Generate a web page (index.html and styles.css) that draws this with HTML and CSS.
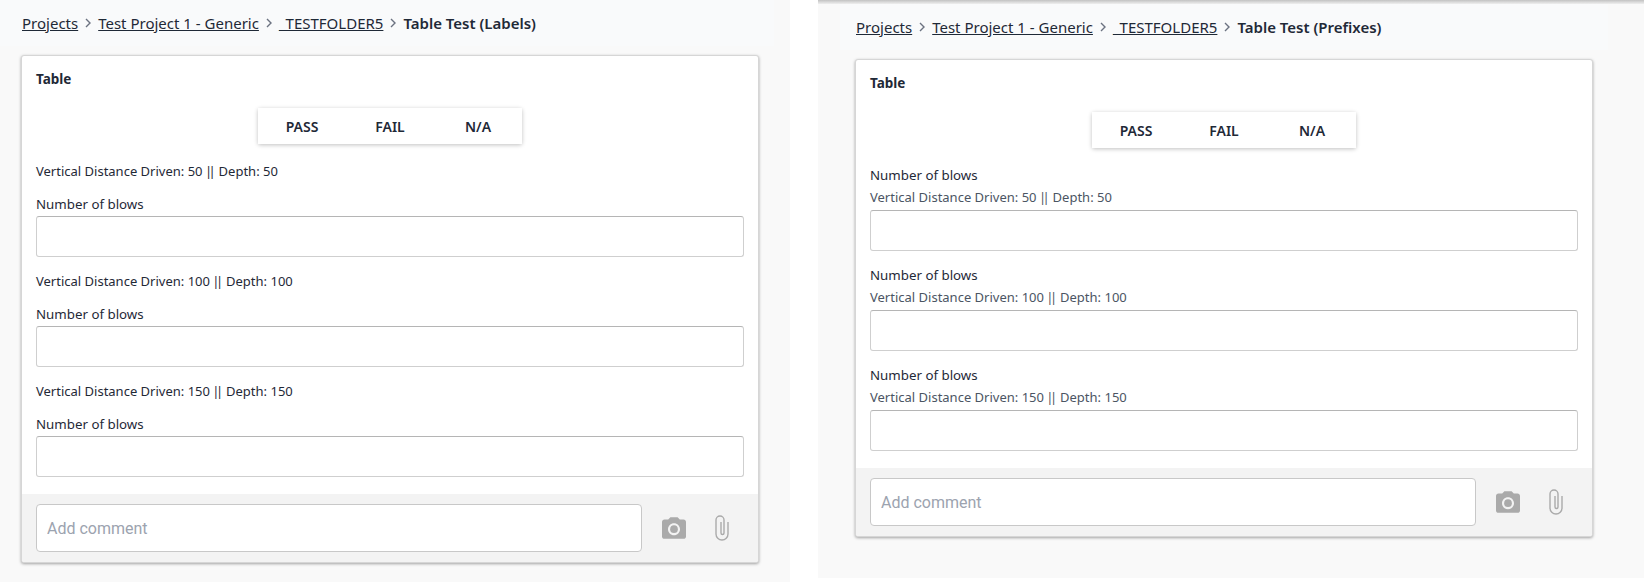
FILE: index.html
```html
<!DOCTYPE html>
<html>
<head>
  <title>Table Test</title>
  <link rel="stylesheet" href="styles.css">
</head>
<body>
  <div class="page">
    <div class="pane pane-left">
      <div class="view">
        <nav class="crumbs">
          <a href="#">Projects</a>
          <svg class="chev" viewBox="0 0 8 12"><path d="M2 2l4 4-4 4"/></svg>
          <a href="#">Test Project 1 - Generic</a>
          <svg class="chev" viewBox="0 0 8 12"><path d="M2 2l4 4-4 4"/></svg>
          <a href="#">_TESTFOLDER5</a>
          <svg class="chev" viewBox="0 0 8 12"><path d="M2 2l4 4-4 4"/></svg>
          <b>Table Test (Labels)</b>
        </nav>
        <div class="card">
          <div class="card-body">
            <h4>Table</h4>
            <div class="choices">
              <button>PASS</button><button>FAIL</button><button>N/A</button>
            </div>
            <div class="row">
              <p class="row-text">Vertical Distance Driven: 50 <span class="bars">||</span> Depth: 50</p>
              <label class="row-label">Number of blows</label>
              <input type="text" class="field">
            </div>
            <div class="row">
              <p class="row-text">Vertical Distance Driven: 100 <span class="bars">||</span> Depth: 100</p>
              <label class="row-label">Number of blows</label>
              <input type="text" class="field">
            </div>
            <div class="row">
              <p class="row-text">Vertical Distance Driven: 150 <span class="bars">||</span> Depth: 150</p>
              <label class="row-label">Number of blows</label>
              <input type="text" class="field">
            </div>
          </div>
          <div class="card-foot">
            <input type="text" class="comment" placeholder="Add comment">
            <div class="tools">
              <svg class="cam" viewBox="2 2 20 18"><path fill-rule="evenodd" d="M9 2L7.17 4H4c-1.1 0-2 .9-2 2v12c0 1.1.9 2 2 2h16c1.1 0 2-.9 2-2V6c0-1.1-.9-2-2-2h-3.17L15 2H9zm3 15c-2.76 0-5-2.24-5-5s2.24-5 5-5 5 2.24 5 5-2.24 5-5 5z"/><circle cx="12" cy="12" r="3.2"/></svg>
              <svg class="clip" viewBox="0 0 14 26"><path d="M13 7v12a6 6 0 0 1-12 0V5a4 4 0 0 1 8 0v13a1.5 1.5 0 0 1-3 0V7"/></svg>
            </div>
          </div>
        </div>
      </div>
    </div>

    <div class="pane pane-right">
      <div class="view">
        <nav class="crumbs">
          <a href="#">Projects</a>
          <svg class="chev" viewBox="0 0 8 12"><path d="M2 2l4 4-4 4"/></svg>
          <a href="#">Test Project 1 - Generic</a>
          <svg class="chev" viewBox="0 0 8 12"><path d="M2 2l4 4-4 4"/></svg>
          <a href="#">_TESTFOLDER5</a>
          <svg class="chev" viewBox="0 0 8 12"><path d="M2 2l4 4-4 4"/></svg>
          <b>Table Test (Prefixes)</b>
        </nav>
        <div class="card">
          <div class="card-body">
            <h4>Table</h4>
            <div class="choices">
              <button>PASS</button><button>FAIL</button><button>N/A</button>
            </div>
            <div class="row">
              <label class="row-label">Number of blows</label>
              <p class="row-help">Vertical Distance Driven: 50 <span class="bars">||</span> Depth: 50</p>
              <input type="text" class="field">
            </div>
            <div class="row">
              <label class="row-label">Number of blows</label>
              <p class="row-help">Vertical Distance Driven: 100 <span class="bars">||</span> Depth: 100</p>
              <input type="text" class="field">
            </div>
            <div class="row">
              <label class="row-label">Number of blows</label>
              <p class="row-help">Vertical Distance Driven: 150 <span class="bars">||</span> Depth: 150</p>
              <input type="text" class="field">
            </div>
          </div>
          <div class="card-foot">
            <input type="text" class="comment" placeholder="Add comment">
            <div class="tools">
              <svg class="cam" viewBox="2 2 20 18"><path fill-rule="evenodd" d="M9 2L7.17 4H4c-1.1 0-2 .9-2 2v12c0 1.1.9 2 2 2h16c1.1 0 2-.9 2-2V6c0-1.1-.9-2-2-2h-3.17L15 2H9zm3 15c-2.76 0-5-2.24-5-5s2.24-5 5-5 5 2.24 5 5-2.24 5-5 5z"/><circle cx="12" cy="12" r="3.2"/></svg>
              <svg class="clip" viewBox="0 0 14 26"><path d="M13 7v12a6 6 0 0 1-12 0V5a4 4 0 0 1 8 0v13a1.5 1.5 0 0 1-3 0V7"/></svg>
            </div>
          </div>
        </div>
      </div>
    </div>
  </div>
</body>
</html>
```

FILE: styles.css
```css
html, body {
  margin: 0;
  height: 100%;
  overflow: hidden;
  background: #fff;
}

body {
  font-family: "Noto Sans", Arial, sans-serif;
  color: #1f2937;
}

.page {
  display: flex;
  height: 582px;
}

.pane {
  background: #f9f9f9;
}

.pane-left {
  width: 790px;
}

.pane-right {
  flex: 1;
  height: 578px;
  margin-left: 28px;
  padding: 4px 0 0 22px;
  background: linear-gradient(#c2c2c2, #efefef 4px, #f9f9f9 4px);
  box-sizing: border-box;
}

.pane-left .view {
  width: 774px;
  padding: 0 15px 0 21px;
  box-sizing: border-box;
}

.pane-right .view {
  width: 768px;
  padding: 0 15px;
  box-sizing: border-box;
}

.crumbs {
  display: flex;
  align-items: center;
  height: 46px;
  margin: 0 -15px 9px -21px;
  padding-left: 22px;
  background: #f9fafb;
  font-size: 15px;
}

.pane-right .crumbs {
  margin: 0 -15px 9px;
  padding-left: 16px;
}

.crumbs a {
  color: #1f2937;
  text-decoration: underline;
}

.crumbs b {
  font-weight: 600;
}

.chev {
  width: 8px;
  height: 12px;
  margin: 0 6px;
  fill: none;
  stroke: #6b7280;
  stroke-width: 1.4;
}

.card {
  background: #fff;
  border: 1px solid #d6d6d6;
  border-radius: 3px;
  box-shadow: 0 1px 3px rgba(0, 0, 0, 0.35);
  overflow: hidden;
}

.card-body {
  padding: 13px 14px 3px;
}

h4 {
  margin: 0;
  font-size: 13.5px;
  line-height: 20px;
  font-weight: 700;
}

.choices {
  display: flex;
  justify-content: center;
  width: 264px;
  margin: 19px auto 17px;
  box-shadow: 0 1px 4px rgba(0, 0, 0, 0.25);
  border-radius: 2px;
}

.choices button {
  width: 88px;
  height: 36px;
  padding: 0;
  border: 0;
  background: #fff;
  font-family: inherit;
  font-size: 14px;
  font-weight: 600;
  color: #1f2937;
}

.row {
  margin-bottom: 14px;
}

.row-text, .row-label, .row-help {
  display: block;
  margin: 0;
  font-size: 13px;
  line-height: 20px;
}

.row-text {
  margin-bottom: 13px;
}

.row-label {
  margin-bottom: 2px;
  font-size: 13.3px;
}

.row-help {
  color: #4b5563;
  margin-bottom: 3px;
}

.bars {
  letter-spacing: -3.5px;
  margin: 0 3px 0 -1px;
}

.field {
  display: block;
  width: 100%;
  height: 41px;
  box-sizing: border-box;
  border: 1px solid #cfcfcf;
  border-top-color: #b5b5b5;
  border-radius: 3px;
  background: #fff;
}

.card-foot {
  display: flex;
  align-items: center;
  height: 68px;
  padding-left: 14px;
  background: #f3f3f3;
}

.comment {
  flex: 1;
  min-width: 0;
  height: 48px;
  box-sizing: border-box;
  padding: 0 10px;
  border: 1px solid #c8c8c8;
  border-radius: 4px;
  background: #fff;
  font-family: Roboto, sans-serif;
  font-size: 16px;
}

.comment::placeholder {
  color: #9ca3af;
}

.tools {
  display: flex;
  align-items: center;
  width: 116px;
  padding-left: 20px;
  box-sizing: border-box;
}

.cam {
  width: 24px;
  height: 22px;
  fill: #aaaaaa;
}

.clip {
  width: 14px;
  height: 26px;
  margin-left: 29px;
  fill: none;
  stroke: #aaaaaa;
  stroke-width: 1.4;
}
```
